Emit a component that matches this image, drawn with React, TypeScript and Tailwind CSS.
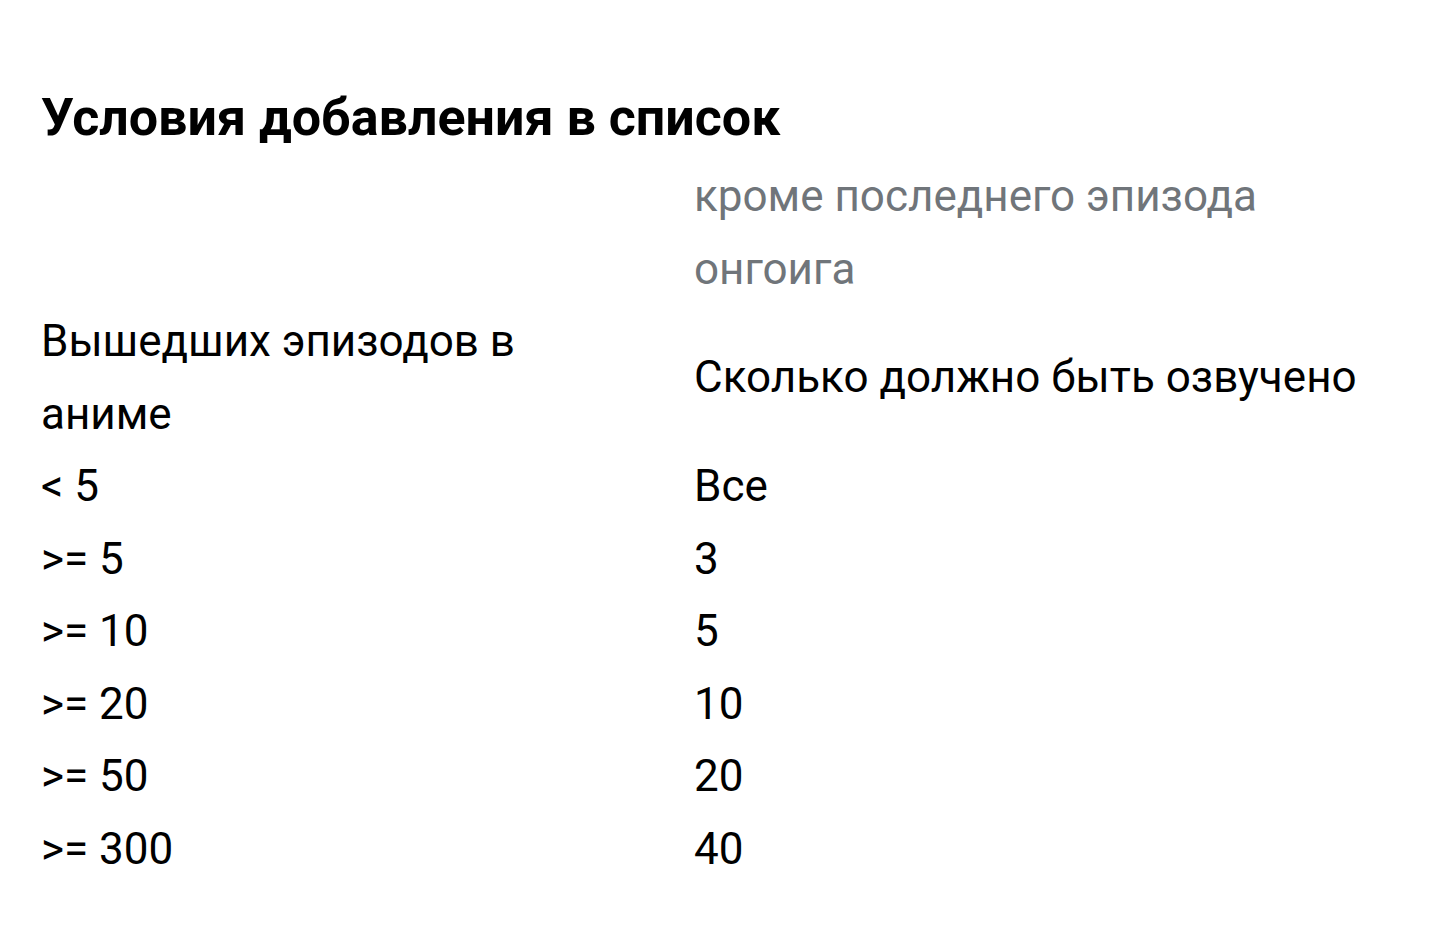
const rows: [string, string][] = [
    ['< 5', 'Все'],
    ['>= 5', '3'],
    ['>= 10', '5'],
    ['>= 20', '10'],
    ['>= 50', '20'],
    ['>= 300', '40'],
];

export default function App() {
    return (
        <div
            className="min-h-[944px] bg-white px-[41px] pt-[88px] text-black"
            style={{ fontFamily: 'Roboto, "Noto Sans", sans-serif' }}
        >
            <h1 className="text-[52px] font-bold leading-[60px]">Условия добавления в список</h1>

            <div className="mt-[12px] grid grid-cols-[653px_1fr] text-[44px] leading-[72.5px]">
                <div />
                <div className="pr-[10px] text-[#70757a]">кроме последнего эпизода онгоига</div>

                <div className="pr-[60px]">Вышедших эпизодов в аниме</div>
                <div className="self-center">Сколько должно быть озвучено</div>

                {rows.map(([count, voiced]) => (
                    <div key={count} className="contents">
                        <div>{count}</div>
                        <div>{voiced}</div>
                    </div>
                ))}
            </div>
        </div>
    );
}
